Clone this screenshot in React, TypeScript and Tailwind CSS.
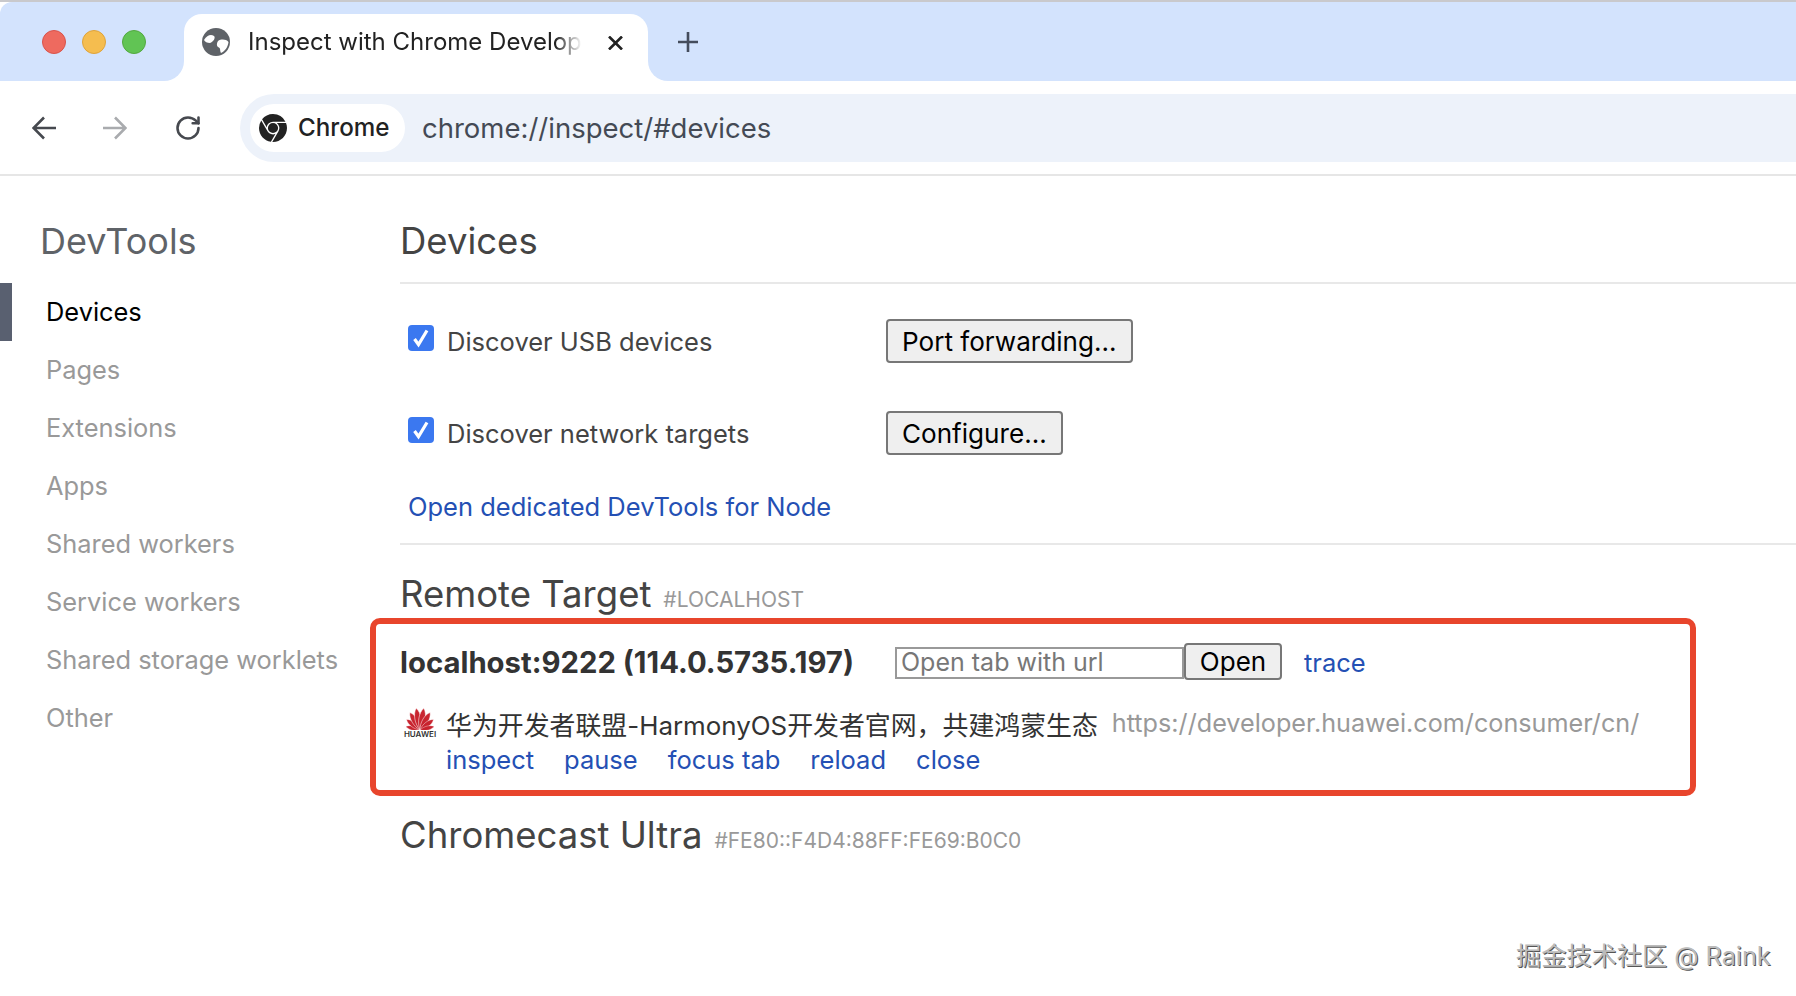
import { RotateCw } from "lucide-react";
import { SiGooglechrome } from "react-icons/si";

const FONT = "font-['Inter','Noto_Sans_CJK_SC',sans-serif]";

const NAV = ["Devices", "Pages", "Extensions", "Apps", "Shared workers", "Service workers", "Shared storage worklets", "Other"];
const ACTIONS = ["inspect", "pause", "focus tab", "reload", "close"];

// angle and length of each petal, the fan is symmetrical
const PETALS = [
  { a: -76, s: 0.66 },
  { a: -52, s: 0.78 },
  { a: -30, s: 0.92 },
  { a: -10, s: 1 },
  { a: 10, s: 1 },
  { a: 30, s: 0.92 },
  { a: 52, s: 0.78 },
  { a: 76, s: 0.66 },
];

function HuaweiLogo() {
  return (
    <div className="flex w-[30px] shrink-0 flex-col items-center">
      <svg width="30" height="22" viewBox="0 0 30 22">
        {PETALS.map((p) => (
          <path
            key={p.a}
            d="M15 22C10.800 15 10.800 5 15 0C19.200 5 19.200 15 15 22Z"
            fill="#c8242f"
            stroke="white"
            strokeWidth="0.500"
            transform={`rotate(${p.a} 15 22) translate(15 22) scale(${p.s}) translate(-15 -22)`}
          />
        ))}
      </svg>
      <span className="text-[8px] leading-[8px] font-semibold whitespace-nowrap text-[#333]">HUAWEI</span>
    </div>
  );
}

function GlobeIcon() {
  return (
    <svg className="ml-[18px] shrink-0" width="28" height="28" viewBox="0 0 28 28">
      <circle cx="14" cy="14" r="14" fill="#5f6368" />
      <path d="M2 12C5 7 9 6 12 8C14 10 11 14 8 15C5 15 3 14 2 12Z" fill="white" />
      <path d="M16 13C19 11 24 11 26.500 14C26 19 23 23 19 25C17.500 22 19 20 16 19C14.500 18 14.500 15 16 13Z" fill="white" />
    </svg>
  );
}

function Checkbox() {
  return (
    <span className="mb-[6px] block h-[26px] w-[26px] shrink-0 rounded-[4px] bg-[#3b78f0]">
      <svg width="26" height="26" viewBox="0 0 26 26" fill="none">
        <path d="M6.500 14L10.500 19.500L19 5.500" stroke="white" strokeWidth="3.200" />
      </svg>
    </span>
  );
}

function OptionRow({ label, button, className }: { label: string; button: string; className: string }) {
  return (
    <div className={`flex h-[44px] items-center pl-[8px] ${className}`}>
      <Checkbox />
      <span className="mt-[2px] ml-[13px] w-[439px] text-[25.500px] text-[#444]">{label}</span>
      <button className="h-[44px] rounded-[4px] border-2 border-[#777] bg-[#efefef] px-[14px] pt-[1px] text-[26.100px] text-black">
        {button}
      </button>
    </div>
  );
}

export default function App() {
  return (
    <div className={`relative h-[996px] w-[1796px] overflow-hidden bg-white ${FONT}`}>
      {/* tab strip */}
      <div className="h-[2px] bg-[#c9c9cc]" />
      <div className="flex h-[79px] items-end rounded-tl-[12px] bg-[#d3e3fd]">
        <div className="flex h-[67px] items-center self-start pt-[12px]">
          <div className="ml-[42px] flex gap-[16px]">
            <span className="h-[24px] w-[24px] rounded-full border border-[#d9534a] bg-[#ee6a5f]" />
            <span className="h-[24px] w-[24px] rounded-full border border-[#dfa33a] bg-[#f5bd4f]" />
            <span className="h-[24px] w-[24px] rounded-full border border-[#53a83f] bg-[#61c454]" />
          </div>
        </div>
        <div className="relative ml-[38px] flex h-[67px] w-[464px] items-start rounded-t-[18px] bg-white pt-[14px]">
          <span className="absolute bottom-0 -left-[20px] h-[20px] w-[20px] bg-white">
            <span className="block h-full w-full rounded-br-[20px] bg-[#d3e3fd]" />
          </span>
          <span className="absolute -right-[20px] bottom-0 h-[20px] w-[20px] bg-white">
            <span className="block h-full w-full rounded-bl-[20px] bg-[#d3e3fd]" />
          </span>
          <GlobeIcon />
          <span className="-mt-[2px] ml-[18px] w-[334px] overflow-hidden text-[24px] leading-[32px] whitespace-nowrap text-[#222] [mask-image:linear-gradient(to_right,black_92%,transparent_100%)]">
            Inspect with Chrome Developer Tools
          </span>
          <svg className="mt-[8px] ml-[26px]" width="15" height="14" viewBox="0 0 15 14" fill="none">
            <path d="M1 0.500L14 13.500M14 0.500L1 13.500" stroke="#222" strokeWidth="2.600" />
          </svg>
        </div>
        <svg className="mb-[29px] ml-[30px]" width="20" height="20" viewBox="0 0 20 20" fill="none">
          <path d="M10 0V20M0 10H20" stroke="#444c5c" strokeWidth="2.600" />
        </svg>
      </div>

      {/* toolbar */}
      <div className="flex h-[95px] items-center border-b-2 border-[#e6e6e6] bg-white pt-[1px]">
        <svg className="ml-[32px]" width="24" height="24" viewBox="0 0 24 24" fill="none">
          <path d="M24 12H2M12 1.500L1.500 12L12 22.500" stroke="#46494f" strokeWidth="2.600" />
        </svg>
        <svg className="ml-[47px]" width="24" height="24" viewBox="0 0 24 24" fill="none">
          <path d="M0 12H22M12 1.500L22.500 12L12 22.500" stroke="#a9abae" strokeWidth="2.600" />
        </svg>
        <RotateCw className="ml-[47px] text-[#46494f]" size={28} strokeWidth={2.200} />
        <div className="ml-[38px] flex h-[68px] flex-1 items-center rounded-l-[34px] bg-[#edf2fa]">
          <div className="ml-[10px] flex h-[48px] w-[155px] items-center rounded-full bg-white">
            <SiGooglechrome className="ml-[9px] shrink-0 text-[#222]" size={28} />
            <span className="ml-[11px] text-[24.200px] font-medium text-[#222]">Chrome</span>
          </div>
          <span className="mt-[1px] ml-[17px] text-[27.500px] text-[#444a55]">chrome://inspect/#devices</span>
        </div>
      </div>

      {/* page */}
      <div className="flex">
        <aside className="w-[400px] shrink-0">
          <h1 className="mt-[40px] ml-[40px] h-[67px] text-[36px] leading-[50px] text-[#5f6368]">DevTools</h1>
          <nav>
            {NAV.map((item, i) => (
              <div
                key={item}
                className={`flex h-[58px] items-center border-l-[12px] pt-[1px] pl-[34px] text-[25.400px] ${
                  i === 0 ? "border-[#596070] text-black" : "border-transparent text-[#999]"
                }`}
              >
                {item}
              </div>
            ))}
          </nav>
        </aside>

        <main className="min-w-0 flex-1">
          <h2 className="mt-[40px] border-b-2 border-[#e8e8e8] pb-[16px] text-[36.500px] leading-[50px] text-[#444]">Devices</h2>
          <OptionRow className="mt-[35px]" label="Discover USB devices" button="Port forwarding..." />
          <OptionRow className="mt-[48px]" label="Discover network targets" button="Configure..." />
          <div className="mt-[36px] border-b-2 border-[#e8e8e8] pb-[20px] pl-[8px]">
            <a className="block text-[25.500px] leading-[32px] text-[#2450b4]">Open dedicated DevTools for Node</a>
          </div>

          <div className="mt-[24px] flex h-[50px] items-baseline gap-[12px] leading-[50px]">
            <span className="text-[36.500px] text-[#444]">Remote Target</span>
            <span className="text-[21px] text-[#999]">#LOCALHOST</span>
          </div>

          <div className="-mt-[1px] -ml-[30px] h-[178px] w-[1326px] rounded-[10px] border-[6px] border-[#e8452c] pt-[19px] pl-[24px]">
            <div className="flex h-[40px] items-center">
              <span className="w-[495px] text-[29.300px] font-bold text-[#333]">localhost:9222 (114.0.5735.197)</span>
              <input
                readOnly
                placeholder="Open tab with url"
                className="h-[32px] w-[289px] border-2 border-[#999] px-[4px] text-[25px] placeholder:text-[#777]"
              />
              <button className="-mt-[3px] h-[37px] w-[98px] rounded-[4px] border-2 border-[#777] bg-[#efefef] text-[26px] leading-[30px] text-black">
                Open
              </button>
              <a className="ml-[22px] text-[25.500px] text-[#2450b4]">trace</a>
            </div>
            <div className="mt-[25px] flex h-[36px] items-start">
              <div className="ml-[5px]">
                <HuaweiLogo />
              </div>
              <span className="ml-[11px] text-[25.900px] leading-[36px] whitespace-nowrap text-[#333]">
                华为开发者联盟-HarmonyOS开发者官网，共建鸿蒙生态
              </span>
              <span className="ml-[14px] text-[25.200px] leading-[30px] whitespace-nowrap text-[#999]">
                https://developer.huawei.com/consumer/cn/
              </span>
            </div>
            <div className="mt-[-1px] flex h-[34px] items-center gap-[30px] pl-[46px]">
              {ACTIONS.map((action) => (
                <a key={action} className="text-[25.500px] text-[#2450b4]">
                  {action}
                </a>
              ))}
            </div>
          </div>

          <div className="mt-[14px] flex h-[50px] items-baseline gap-[12px] leading-[50px]">
            <span className="text-[36.500px] text-[#444]">Chromecast Ultra</span>
            <span className="text-[21px] text-[#999]">#FE80::F4D4:88FF:FE69:B0C0</span>
          </div>
        </main>
      </div>

      {/* watermark */}
      <span className="absolute top-[938px] left-[1516px] text-[25.200px] leading-[36px] text-[#bbb] [text-shadow:1px_1px_0_#555]">
        掘金技术社区 @ Raink
      </span>
    </div>
  );
}
